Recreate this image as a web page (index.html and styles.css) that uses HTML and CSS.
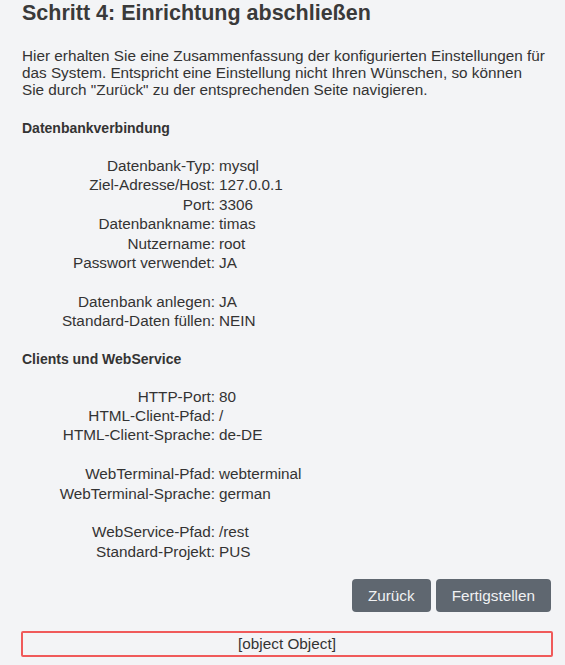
FILE: index.html
```html
<!DOCTYPE html>
<html lang="de">
<head>
    <meta charset="UTF-8">
    <meta name="viewport" content="width=device-width, initial-scale=1.0">
    <title>Schritt 4: Einrichtung abschließen</title>
    <link rel="stylesheet" href="styles.css">
</head>
<body>
    <div class="wizard">
        <h1>Schritt 4: Einrichtung abschließen</h1>

        <p class="intro">Hier erhalten Sie eine Zusammenfassung der konfigurierten Einstellungen für<br>
            das System. Entspricht eine Einstellung nicht Ihren Wünschen, so können<br>
            Sie durch "Zurück" zu der entsprechenden Seite navigieren.</p>

        <h2>Datenbankverbindung</h2>
        <div class="summary">
            <span class="key">Datenbank-Typ:</span><span class="val">mysql</span>
            <span class="key">Ziel-Adresse/Host:</span><span class="val">127.0.0.1</span>
            <span class="key">Port:</span><span class="val">3306</span>
            <span class="key">Datenbankname:</span><span class="val">timas</span>
            <span class="key">Nutzername:</span><span class="val">root</span>
            <span class="key">Passwort verwendet:</span><span class="val">JA</span>
            <span class="spacer"></span>
            <span class="key">Datenbank anlegen:</span><span class="val">JA</span>
            <span class="key">Standard-Daten füllen:</span><span class="val">NEIN</span>
        </div>

        <h2>Clients und WebService</h2>
        <div class="summary">
            <span class="key">HTTP-Port:</span><span class="val">80</span>
            <span class="key">HTML-Client-Pfad:</span><span class="val">/</span>
            <span class="key">HTML-Client-Sprache:</span><span class="val">de-DE</span>
            <span class="spacer"></span>
            <span class="key">WebTerminal-Pfad:</span><span class="val">webterminal</span>
            <span class="key">WebTerminal-Sprache:</span><span class="val">german</span>
            <span class="spacer"></span>
            <span class="key">WebService-Pfad:</span><span class="val">/rest</span>
            <span class="key">Standard-Projekt:</span><span class="val">PUS</span>
        </div>

        <div class="actions">
            <button class="btn">Zurück</button>
            <button class="btn">Fertigstellen</button>
        </div>

        <div class="error">[object Object]</div>
    </div>
</body>
</html>
```

FILE: styles.css
```css
body {
    font-family: "Liberation Sans", Arial, sans-serif;
    background-color: #f3f4f6;
    color: #333;
    margin: 0;
}

.wizard {
    padding: 0 12px 0 22px;
}

h1 {
    font-size: 21.5px;
    margin: 0;
    line-height: 26px;
    color: #3a3a3a;
}

.intro {
    font-size: 15.3px;
    line-height: 17px;
    margin: 21px 0 0;
}

h2 {
    font-size: 14px;
    margin: 22px 0 0;
    line-height: 17px;
}

.summary {
    display: grid;
    grid-template-columns: 193px auto;
    column-gap: 4px;
    font-size: 15.3px;
    line-height: 19.4px;
    margin-top: 19px;
}

.summary .key {
    text-align: right;
}

.summary .spacer {
    grid-column: 1 / -1;
    height: 19.4px;
}

.summary + h2 {
    margin-top: 20px;
}

.actions {
    display: flex;
    justify-content: flex-end;
    gap: 5px;
    margin: 18px 2px 0 0;
}

.btn {
    font-family: inherit;
    font-size: 15.3px;
    color: #f0f1f3;
    background: #5f6770;
    border: none;
    border-radius: 4px;
    padding: 0 16px;
    height: 33px;
}

.error {
    margin: 19px 0 0 -1px;
    border: 2px solid #f05a5a;
    border-radius: 2px;
    text-align: center;
    font-size: 15.3px;
    line-height: 22px;
}
```
